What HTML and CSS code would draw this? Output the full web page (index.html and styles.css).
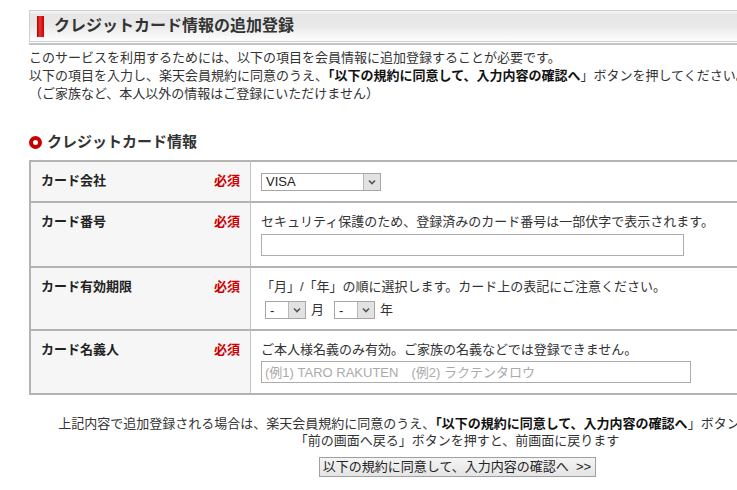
FILE: index.html
```html
<!DOCTYPE html>
<html lang="ja">
<head>
  <meta charset="UTF-8" />
  <meta name="viewport" content="width=device-width, initial-scale=1.0"/>
  <title>クレジットカード情報の追加登録</title>
  <link rel="stylesheet" href="styles.css">
</head>
<body>
  <div class="wrap">
    <div class="page-title">
      <h1><span class="title-bar"></span>クレジットカード情報の追加登録</h1>
    </div>

    <div class="intro">
      <p>このサービスを利用するためには、以下の項目を会員情報に追加登録することが必要です。</p>
      <p>以下の項目を入力し、楽天会員規約に同意のうえ、<strong>「以下の規約に同意して、入力内容の確認へ</strong>」ボタンを押してください。</p>
      <p>（ご家族など、本人以外の情報はご登録にいただけません）</p>
    </div>

    <h2 class="section-title"><span class="ring"></span>クレジットカード情報</h2>

    <table class="form-table">
      <tr>
        <th><div class="th-inner"><span>カード会社</span><span class="req">必須</span></div></th>
        <td>
          <span class="sel sel-wide">
            <select name="card_brand">
              <option>VISA</option>
              <option>MasterCard</option>
              <option>JCB</option>
              <option>AMEX</option>
            </select>
            <span class="sel-arrow"><svg width="8" height="6" viewBox="0 0 8 6"><path d="M1 1.5 L4 4.5 L7 1.5" fill="none" stroke="#555" stroke-width="1.6"/></svg></span>
          </span>
        </td>
      </tr>
      <tr>
        <th><div class="th-inner"><span>カード番号</span><span class="req">必須</span></div></th>
        <td>
          <p class="hint">セキュリティ保護のため、登録済みのカード番号は一部伏字で表示されます。</p>
          <input type="text" class="text-input card-number" name="card_number">
        </td>
      </tr>
      <tr>
        <th><div class="th-inner"><span>カード有効期限</span><span class="req">必須</span></div></th>
        <td>
          <p class="hint">「月」/「年」の順に選択します。カード上の表記にご注意ください。</p>
          <div class="expiry">
            <span class="sel sel-small">
              <select name="exp_month"><option>-</option></select>
              <span class="sel-arrow"><svg width="8" height="6" viewBox="0 0 8 6"><path d="M1 1.5 L4 4.5 L7 1.5" fill="none" stroke="#555" stroke-width="1.6"/></svg></span>
            </span>
            <span class="unit">月</span>
            <span class="sel sel-small">
              <select name="exp_year"><option>-</option></select>
              <span class="sel-arrow"><svg width="8" height="6" viewBox="0 0 8 6"><path d="M1 1.5 L4 4.5 L7 1.5" fill="none" stroke="#555" stroke-width="1.6"/></svg></span>
            </span>
            <span class="unit">年</span>
          </div>
        </td>
      </tr>
      <tr>
        <th><div class="th-inner"><span>カード名義人</span><span class="req">必須</span></div></th>
        <td>
          <p class="hint">ご本人様名義のみ有効。ご家族の名義などでは登録できません。</p>
          <input type="text" class="text-input card-name" name="card_name" placeholder="(例1) TARO RAKUTEN　(例2) ラクテンタロウ">
        </td>
      </tr>
    </table>

    <div class="note">
      <p>上記内容で追加登録される場合は、楽天会員規約に同意のうえ、<strong>「以下の規約に同意して、入力内容の確認へ</strong>」ボタンを押してください。</p>
      <p>「前の画面へ戻る」ボタンを押すと、前画面に戻ります</p>
    </div>

    <div class="actions">
      <button type="button" class="submit-btn">以下の規約に同意して、入力内容の確認へ &nbsp;&gt;&gt;</button>
    </div>
  </div>
</body>
</html>
```

FILE: styles.css
```css
html, body {
  overflow-x: hidden;
}
body {
  margin: 0;
  padding: 0;
  background-color: #fff;
  color: #333;
  font-family: "Liberation Sans", "Noto Sans CJK JP", sans-serif;
  font-size: 13px;
  line-height: 18px;
}
p {
  margin: 0;
}
.wrap {
  width: 856px;
  margin: 10px 0 0 29px;
}
.page-title {
  padding-bottom: 1px;
  border-bottom: 2px solid #c4c4c4;
}
h1 {
  margin: 0;
  height: 30px;
  display: flex;
  align-items: center;
  gap: 10px;
  padding-left: 7px;
  border: 1px solid #cfcfcf;
  background: linear-gradient(#f6f6f6 0%, #e6e6e6 12%, #e9e9e9 50%, #fafafa 90%, #fff 100%);
  font-size: 16px;
  font-weight: bold;
  color: #333;
}
.title-bar {
  width: 7px;
  height: 21px;
  background: linear-gradient(to right, #a80000, #f03030 40%, #c40000);
}
.intro {
  margin-top: 4px;
}
.intro strong,
.note strong {
  color: #111;
}
.section-title {
  margin: 29px 0 0 0;
  display: flex;
  align-items: center;
  gap: 5px;
  font-size: 15px;
  line-height: 20px;
  font-weight: bold;
  color: #333;
}
.ring {
  width: 5px;
  height: 5px;
  border: 4px solid #c80000;
  border-radius: 50%;
  background: #fff;
}
.form-table {
  width: 100%;
  margin-top: 8px;
  border-collapse: collapse;
  border: 2px solid #b4b4b4;
}
.form-table th,
.form-table td {
  border: 2px solid #b4b4b4;
  vertical-align: top;
  line-height: 20px;
}
.form-table th {
  width: 199px;
  padding: 9px 10px 10px 10px;
  background-color: #f6f6f6;
  border-right: 1px solid #c4c4c4;
  text-align: left;
  font-weight: bold;
  color: #222;
}
.form-table td {
  padding: 9px 10px 10px 10px;
  border-left: 1px solid #c4c4c4;
}
.th-inner {
  display: flex;
  justify-content: space-between;
}
.req {
  color: #c00;
}
.hint {
  line-height: 20px;
}
.sel {
  position: relative;
  display: inline-block;
  vertical-align: middle;
}
.sel select {
  appearance: none;
  -webkit-appearance: none;
  display: block;
  height: 18px;
  margin: 0;
  padding: 0 0 0 4px;
  border: 1px solid #a6a6a6;
  border-radius: 0;
  background: #fff;
  font-family: "Liberation Sans", "Noto Sans CJK JP", sans-serif;
  font-size: 13px;
  color: #222;
}
.sel-wide select {
  width: 120px;
}
.sel-small select {
  width: 41px;
}
.sel-arrow {
  position: absolute;
  top: 1px;
  right: 1px;
  bottom: 1px;
  width: 16px;
  display: flex;
  align-items: center;
  justify-content: center;
  background: #e2e2e2;
  border-left: 1px solid #b8b8b8;
  pointer-events: none;
}
.expiry {
  margin-top: 4px;
  padding-left: 4px;
  display: flex;
  align-items: center;
  height: 18px;
}
.unit {
  margin: 0 10px 0 5px;
}
.text-input {
  display: block;
  box-sizing: border-box;
  height: 22px;
  margin: 2px 0 0 0;
  padding: 0 3px;
  border: 1px solid #adadad;
  font-family: "Liberation Sans", "Noto Sans CJK JP", sans-serif;
  font-size: 13px;
  color: #222;
}
.text-input::placeholder {
  color: #aaa;
}
.card-number {
  width: 423px;
}
.card-name {
  width: 430px;
  margin-top: 1px;
}
.note {
  margin-top: 20px;
  text-align: center;
  line-height: 17px;
  white-space: nowrap;
}
.actions {
  margin-top: 8px;
  text-align: center;
}
.submit-btn {
  width: 277px;
  height: 20px;
  padding: 0;
  border: 1px solid #a0a0a0;
  border-radius: 0;
  background: linear-gradient(#f4f4f4, #e4e4e4);
  font-family: "Liberation Sans", "Noto Sans CJK JP", sans-serif;
  font-size: 13px;
  line-height: 18px;
  color: #222;
  cursor: pointer;
}
```
